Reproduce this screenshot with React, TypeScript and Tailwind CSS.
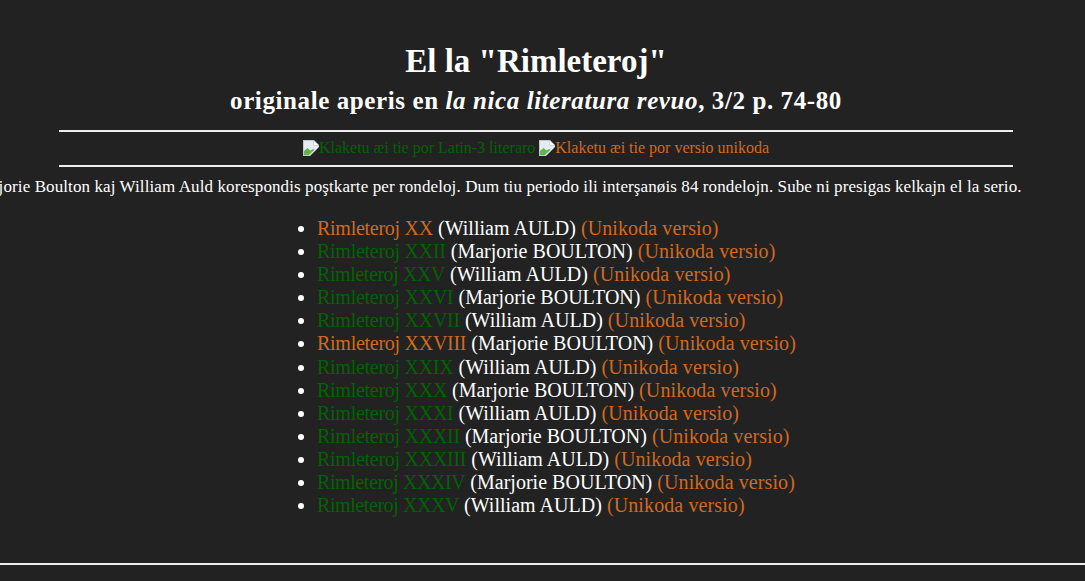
const GREEN = "text-[#006400]";
const ORANGE = "text-[#d2691e]";
const TIGHT = "tracking-[-0.27px]";
const TIGHTER = "tracking-[-0.42px]";

function BrokenImage() {
  return (
    <svg width="16" height="16" viewBox="0 0 16 16" className="inline-block align-[-3px]">
      <path d="M0 0H11L16 5V16H0Z" fill="#c3c7cc" />
      <path d="M1 1H10.5V5.5H15V15H1Z" fill="#e4ebf7" />
      <path d="M11 1L15 5H11Z" fill="#ffffff" />
      <path d="M1 15V11L4.5 8L7.5 10.5L10 9L12 10L7 15Z" fill="#63b54a" />
      <path d="M7 16L16 7V16Z" fill="#222222" />
      <path d="M6 15.5L15.5 6.5" stroke="#f2f2f2" strokeWidth="1" />
    </svg>
  );
}

const W = "William AULD";
const M = "Marjorie BOULTON";

const items: [string, string, string, string][] = [
  ["Rimleteroj XX", W, ORANGE, TIGHT],
  ["Rimleteroj XXII", M, GREEN, TIGHT],
  ["Rimleteroj XXV", W, GREEN, TIGHTER],
  ["Rimleteroj XXVI", M, GREEN, TIGHT],
  ["Rimleteroj XXVII", W, GREEN, TIGHT],
  ["Rimleteroj XXVIII", M, ORANGE, TIGHT],
  ["Rimleteroj XXIX", W, GREEN, TIGHT],
  ["Rimleteroj XXX", M, GREEN, TIGHT],
  ["Rimleteroj XXXI", W, GREEN, TIGHT],
  ["Rimleteroj XXXII", M, GREEN, TIGHT],
  ["Rimleteroj XXXIII", W, GREEN, TIGHT],
  ["Rimleteroj XXXIV", M, GREEN, TIGHTER],
  ["Rimleteroj XXXV", W, GREEN, TIGHTER],
];

export default function App() {
  return (
    <div className="h-[581px] overflow-hidden bg-[#222222] text-white font-['Liberation_Serif',serif]">
      <div className="w-[1072px]">
        <div className="pt-[41px] text-center">
          <h1 className="text-[33px] leading-[40px] font-bold">El la "Rimleteroj"</h1>
          <h2 className="text-[25px] leading-[30px] font-bold mt-[5px] tracking-[0.6px]">
            originale aperis en <em>la nica literatura revuo</em>, 3/2 p. 74-80
          </h2>
        </div>
        <hr className="mx-auto mt-[14px] w-[954px] border-t-2 border-[#eeeeee]" />
        <div className="mt-[5px] h-[28px] text-center text-base leading-[22px]">
          <a className={GREEN}><BrokenImage />Klaketu æi tie por Latin-3 literaro</a>{" "}
          <a className={ORANGE}><BrokenImage />Klaketu æi tie por versio unikoda</a>
        </div>
        <hr className="mx-auto w-[954px] border-t-2 border-[#eeeeee]" />
      </div>
      <p className="mt-[10px] ml-[-30px] whitespace-nowrap text-[17px] leading-[20px] tracking-[0.1px]">
        Marjorie Boulton kaj William Auld korespondis poştkarte per rondeloj. Dum tiu periodo ili interşanøis 84 rondelojn. Sube ni presigas kelkajn el la serio.
      </p>
      <ul className="mt-[20px] ml-[277px] list-disc pl-10 text-[20px] leading-[23.1px] whitespace-nowrap">
        {items.map(([title, author, color, tracking]) => (
          <li key={title}>
            <a className={`${color} ${tracking}`}>{title}</a>{" "}
            <span className={author === W ? "tracking-[0.03px]" : "tracking-[0.02px]"}>({author})</span>{" "}
            <a className={`${ORANGE} tracking-[0.1px]`}>(Unikoda versio)</a>
          </li>
        ))}
      </ul>
      <hr className="mt-[46px] border-t-2 border-[#eeeeee]" />
    </div>
  );
}
